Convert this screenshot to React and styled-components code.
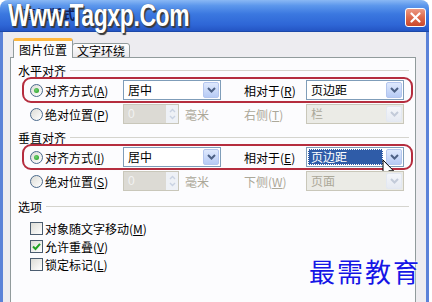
import React from "react";
import styled, { createGlobalStyle } from "styled-components";

const GlobalStyle = createGlobalStyle`
  html, body {
    margin: 0;
    padding: 0;
    background: #ffffff;
  }
  body {
    width: 432px;
    height: 302px;
    overflow: hidden;
    font-family: "Noto Sans CJK SC", "Liberation Sans", sans-serif;
    font-size: 12px;
    color: #000000;
  }
  * { box-sizing: border-box; }
`;

export default function App() {
  return (
    <>
      <GlobalStyle />
      <Page>
        <Window>
          <TitleBar>
            <TitleText>高级版式</TitleText>
            <SiteMark>Www.Tagxp.Com</SiteMark>
            <CloseButton>
              <svg width="11" height="11" viewBox="0 0 11 11">
                <path d="M1.5 1.5 L9.5 9.5 M9.5 1.5 L1.5 9.5" stroke="#ffffff" strokeWidth="2.2" strokeLinecap="round" />
              </svg>
            </CloseButton>
          </TitleBar>
          <Body>
            <TabRow>
              <Tab $active>图片位置</Tab>
              <Tab>文字环绕</Tab>
            </TabRow>
            <Panel>
              <Section>
                <SectionHeader>
                  <span>水平对齐</span>
                  <Rule />
                </SectionHeader>
                <HighlightRow>
                  <OptionCell>
                    <Radio $checked />
                    <span>对齐方式(<u>A</u>)</span>
                  </OptionCell>
                  <Select value="居中" />
                  <RelLabel>相对于(<u>R</u>)</RelLabel>
                  <Select value="页边距" />
                </HighlightRow>
                <Row>
                  <OptionCell>
                    <Radio />
                    <span>绝对位置(<u>P</u>)</span>
                  </OptionCell>
                  <SpinField />
                  <RelLabel $disabled>右侧(<u>T</u>)</RelLabel>
                  <Select value="栏" disabled />
                </Row>
              </Section>

              <Section>
                <SectionHeader>
                  <span>垂直对齐</span>
                  <Rule />
                </SectionHeader>
                <HighlightRow>
                  <OptionCell>
                    <Radio $checked />
                    <span>对齐方式(<u>I</u>)</span>
                  </OptionCell>
                  <Select value="居中" />
                  <RelLabel>相对于(<u>E</u>)</RelLabel>
                  <Select value="页边距" selected />
                </HighlightRow>
                <Row>
                  <OptionCell>
                    <Radio />
                    <span>绝对位置(<u>S</u>)</span>
                  </OptionCell>
                  <SpinField />
                  <RelLabel $disabled>下侧(<u>W</u>)</RelLabel>
                  <Select value="页面" disabled />
                </Row>
              </Section>

              <Section $gapTop={9}>
                <SectionHeader $bottom={6}>
                  <span>选项</span>
                  <Rule />
                </SectionHeader>
                <CheckRow>
                  <CheckBox />
                  <span>对象随文字移动(<u>M</u>)</span>
                </CheckRow>
                <CheckRow>
                  <CheckBox $checked>
                    <svg width="9" height="9" viewBox="0 0 9 9">
                      <path d="M1 4.5 L3.5 7 L8 1.8" fill="none" stroke="#21a121" strokeWidth="2" />
                    </svg>
                  </CheckBox>
                  <span>允许重叠(<u>V</u>)</span>
                </CheckRow>
                <CheckRow>
                  <CheckBox />
                  <span>锁定标记(<u>L</u>)</span>
                </CheckRow>
              </Section>
            </Panel>
          </Body>
        </Window>
        <CornerMark>最需教育</CornerMark>
      </Page>
    </>
  );
}

function Select({ value, disabled, selected }) {
  return (
    <SelectBox $disabled={disabled}>
      <SelectValue $selected={selected} $disabled={disabled}>
        {value}
      </SelectValue>
      <DropButton $disabled={disabled}>
        <svg width="9" height="6" viewBox="0 0 9 6">
          <path d="M1 1 L4.5 4.5 L8 1" fill="none" stroke={disabled ? "#c3cbd9" : "#4d6185"} strokeWidth="2" />
        </svg>
      </DropButton>
      {selected && (
        <Cursor width="12" height="20" viewBox="0 0 12 20">
          <path d="M1 1 L1 16 L4.5 12.5 L7 18.5 L9.2 17.6 L6.8 11.8 L11.5 11.8 Z" fill="#ffffff" stroke="#000000" strokeWidth="1" />
        </Cursor>
      )}
    </SelectBox>
  );
}

function SpinField() {
  return (
    <SpinCell>
      <NumberBox>0</NumberBox>
      <Spinner>
        <svg width="7" height="14" viewBox="0 0 7 14">
          <path d="M1 5 L3.5 2.5 L6 5 M1 9 L3.5 11.5 L6 9" fill="none" stroke="#c9d2e2" strokeWidth="1.4" />
        </svg>
      </Spinner>
      <Unit>毫米</Unit>
    </SpinCell>
  );
}

const Page = styled.div`
  position: relative;
  width: 432px;
  height: 302px;
  overflow: hidden;
  background: #ffffff;
`;

const Window = styled.div`
  width: 429px;
  height: 320px;
  display: flex;
  flex-direction: column;
  border-radius: 8px 8px 0 0;
  overflow: hidden;
  background: #edecf0;
`;

const TitleBar = styled.div`
  position: relative;
  height: 32px;
  flex-shrink: 0;
  display: flex;
  align-items: flex-end;
  justify-content: space-between;
  padding: 0 3px 4px 8px;
  background: linear-gradient(
    to bottom,
    #8ab8f4 0%,
    #5c97ec 18%,
    #3b78e0 45%,
    #2e66d6 80%,
    #2455c4 100%
  );
  border-bottom: 1px solid #1c48a8;
`;

const TitleText = styled.span`
  align-self: center;
  color: #0e1f5c;
  font-size: 13px;
  font-weight: bold;
  padding-left: 15px;
`;

const SiteMark = styled.span`
  position: absolute;
  left: 8px;
  top: 1px;
  font-family: "Liberation Sans", Arial, sans-serif;
  font-size: 31px;
  line-height: 30px;
  font-weight: bold;
  letter-spacing: -0.5px;
  color: #ffffff;
  white-space: nowrap;
  transform: scaleX(0.74);
  transform-origin: left top;
  text-shadow: 2px 2px 1px #3a3a3a, 0 0 1px #444444;
`;

const CloseButton = styled.div`
  width: 21px;
  height: 19px;
  display: flex;
  align-items: center;
  justify-content: center;
  border: 1px solid #ffffff;
  border-radius: 3px;
  background: linear-gradient(to bottom, #eb9a85 0%, #dd6a4c 50%, #c9482c 100%);
`;

const Body = styled.div`
  flex: 1;
  display: flex;
  flex-direction: column;
  padding: 6px 10px 0 7px;
  border-left: 3px solid #5b82d8;
  border-right: 3px solid #5b82d8;
`;

const TabRow = styled.div`
  display: flex;
  align-items: flex-end;
  height: 20px;
  padding-left: 3px;
  margin-bottom: -1px;
  position: relative;
  z-index: 1;
`;

const Tab = styled.div`
  height: ${(p) => (p.$active ? "20px" : "15px")};
  width: ${(p) => (p.$active ? "60px" : "58px")};
  margin-left: ${(p) => (p.$active ? "0" : "-1px")};
  display: flex;
  align-items: center;
  justify-content: center;
  font-size: 12px;
  line-height: 1;
  border: 1px solid #919b9c;
  border-bottom: ${(p) => (p.$active ? "none" : "1px solid #919b9c")};
  border-top: ${(p) => (p.$active ? "3px solid #ffb73c" : "1px solid #919b9c")};
  border-radius: 3px 3px 0 0;
  background: ${(p) =>
    p.$active ? "#fcfcfe" : "linear-gradient(to bottom, #ffffff, #e9e8ec)"};
  padding-top: ${(p) => (p.$active ? "0" : "1px")};
`;

const Panel = styled.div`
  flex: 1;
  background: #fcfcfe;
  border: 1px solid #919b9c;
  padding: 6px 6px 0 7px;
`;

const Section = styled.div`
  margin-top: ${(p) => p.$gapTop || 0}px;
  margin-bottom: 7px;
`;

const SectionHeader = styled.div`
  display: flex;
  align-items: center;
  gap: 4px;
  height: 13px;
  line-height: 13px;
  margin-bottom: ${(p) => p.$bottom || 0}px;
`;

const Rule = styled.div`
  flex: 1;
  height: 1px;
  background: #d5d4ce;
`;

const Row = styled.div`
  display: flex;
  align-items: center;
  height: 20px;
  margin-top: 1px;
  padding-left: 12px;
`;

const HighlightRow = styled(Row)`
  height: 26px;
  margin: 0 -4px 0 4px;
  padding-left: 6px;
  border: 2px solid #b52d3e;
  border-radius: 9px;
`;

const OptionCell = styled.div`
  width: 93px;
  display: flex;
  align-items: center;
  gap: 2px;
  white-space: nowrap;
`;

const Radio = styled.span`
  position: relative;
  width: 13px;
  height: 13px;
  flex-shrink: 0;
  border-radius: 50%;
  border: 1px solid #4b6a8c;
  background: linear-gradient(135deg, #dcdcd6, #ffffff);

  &::after {
    content: "";
    display: ${(p) => (p.$checked ? "block" : "none")};
    position: absolute;
    left: 3px;
    top: 3px;
    width: 5px;
    height: 5px;
    border-radius: 50%;
    background: radial-gradient(circle at 40% 40%, #70d070, #1f9a1f);
  }
`;

const RelLabel = styled.span`
  width: 62px;
  margin-left: 23px;
  white-space: nowrap;
  color: ${(p) => (p.$disabled ? "#aca899" : "#000000")};
`;

const SelectBox = styled.div`
  position: relative;
  width: 98px;
  height: 20px;
  display: flex;
  align-items: center;
  padding: 1px;
  border: 1px solid ${(p) => (p.$disabled ? "#c9c7ba" : "#7f9db9")};
  background: ${(p) => (p.$disabled ? "#ebebe6" : "#ffffff")};
`;

const SelectValue = styled.span`
  flex: 1;
  height: 16px;
  line-height: 15px;
  margin-right: 3px;
  padding-left: 3px;
  white-space: nowrap;
  color: ${(p) => (p.$selected ? "#ffffff" : p.$disabled ? "#aca899" : "#000000")};
  background: ${(p) => (p.$selected ? "#2f5ca8" : "transparent")};
  outline: ${(p) => (p.$selected ? "1px dotted #ffffff" : "none")};
  outline-offset: -1px;
`;

const DropButton = styled.span`
  width: 16px;
  height: 16px;
  display: flex;
  align-items: center;
  justify-content: center;
  border: 1px solid ${(p) => (p.$disabled ? "#e3e8f2" : "#b4c6ee")};
  border-radius: 2px;
  background: ${(p) =>
    p.$disabled
      ? "linear-gradient(to bottom, #f4f6fa, #e6eaf2)"
      : "linear-gradient(to bottom, #dfe9fd, #b7cbf5)"};
`;

const Cursor = styled.svg`
  position: absolute;
  left: 75px;
  top: 11px;
`;

const SpinCell = styled.div`
  width: 98px;
  display: flex;
  align-items: center;
`;

const NumberBox = styled.span`
  width: 43px;
  height: 20px;
  line-height: 18px;
  padding-left: 4px;
  border: 1px solid #c9c7ba;
  border-right: none;
  background: #dcdad4;
  color: #f2f2f2;
  font-family: "Liberation Sans", sans-serif;
`;

const Spinner = styled.span`
  width: 13px;
  height: 20px;
  display: flex;
  align-items: center;
  justify-content: center;
  border: 1px solid #c9c7ba;
  border-left: none;
  background: #eef1f6;
`;

const Unit = styled.span`
  margin-left: 6px;
  color: #aca899;
`;

const CheckRow = styled.div`
  display: flex;
  align-items: center;
  gap: 2px;
  height: 18px;
  padding-left: 12px;
`;

const CheckBox = styled.span`
  width: 13px;
  height: 13px;
  display: flex;
  align-items: center;
  justify-content: center;
  border: 1px solid #4b5d70;
  background: linear-gradient(135deg, #dcdcd6, #ffffff);
`;

const CornerMark = styled.div`
  position: absolute;
  left: 309px;
  top: 252px;
  font-family: "Noto Sans CJK SC", sans-serif;
  font-size: 26px;
  letter-spacing: 2px;
  color: #1515e6;
  text-shadow: 0 0 2px #ffffff, 0 0 3px #ffffff;
`;
